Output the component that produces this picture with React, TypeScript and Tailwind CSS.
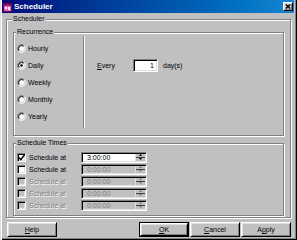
import React from "react";

// classic 3d edges
const raised =
  "border border-t-white border-l-white border-r-black border-b-black shadow-[inset_1px_1px_0_#dfdfdf,inset_-1px_-1px_0_#808080]";
const sunken =
  "border border-t-[#808080] border-l-[#808080] border-r-white border-b-white shadow-[inset_1px_1px_0_#000,inset_-1px_-1px_0_#dfdfdf]";
const etched = "border border-[#808080] shadow-[inset_1px_1px_0_#fff,1px_1px_0_#fff]";
const greyed = "text-[#808080] [text-shadow:1px_1px_0_#fff]";

const RECURRENCE = ["Hourly", "Daily", "Weekly", "Monthly", "Yearly"];

const TIMES = [
  { checked: true, boxOn: true, fieldOn: true, value: "3:00:00" },
  { checked: false, boxOn: true, fieldOn: false, value: "0:00:00" },
  { checked: false, boxOn: false, fieldOn: false, value: "0:00:00" },
  { checked: false, boxOn: false, fieldOn: false, value: "0:00:00" },
  { checked: false, boxOn: false, fieldOn: false, value: "0:00:00" },
];

function Radio({ checked }: { checked?: boolean }) {
  return (
    <svg width="9" height="9" viewBox="0 0 9 9" className="shrink-0">
      <circle cx="4.5" cy="4.5" r="2.6" fill="#fff" />
      <path d="M1.67 7.33 A4 4 0 0 1 7.33 1.67" stroke="#808080" fill="none" />
      <path d="M7.33 1.67 A4 4 0 0 1 1.67 7.33" stroke="#fff" fill="none" />
      <path d="M2.38 6.62 A3 3 0 0 1 6.62 2.38" stroke="#000" fill="none" />
      <path d="M6.62 2.38 A3 3 0 0 1 2.38 6.62" stroke="#dfdfdf" fill="none" />
      {checked && <circle cx="4.5" cy="4.5" r="1.3" fill="#000" />}
    </svg>
  );
}

function Check({ checked, enabled }: { checked: boolean; enabled: boolean }) {
  return (
    <div
      className={`${sunken} w-[9px] h-[9px] shrink-0 flex items-center justify-center ${
        enabled ? "bg-white" : "bg-[#c0c0c0]"
      }`}
    >
      {checked && (
        <svg width="7" height="7" viewBox="0 0 7 7" className="shrink-0 overflow-visible">
          <path d="M0.8 3.4 L2.8 5.6 L6.6 0.8" stroke="#000" strokeWidth="1.5" fill="none" />
        </svg>
      )}
    </div>
  );
}

function Spinner({ enabled }: { enabled: boolean }) {
  const c = enabled ? "#000" : "#808080";
  return (
    <div className="w-[10px] h-full flex flex-col bg-[#c0c0c0] border-l border-l-[#dfdfdf]">
      <div className="flex-1 flex items-center justify-center border-b border-b-[#404040]">
        <svg width="3" height="2" viewBox="0 0 3 2">
          <path d="M0 2 L1.5 0 L3 2Z" fill={c} />
        </svg>
      </div>
      <div className="flex-1 flex items-center justify-center">
        <svg width="3" height="2" viewBox="0 0 3 2">
          <path d="M0 0 L1.5 2 L3 0Z" fill={c} />
        </svg>
      </div>
    </div>
  );
}

function Button({ label, ul, isDefault }: { label: string; ul: number; isDefault?: boolean }) {
  const text = (
    <span>
      {label.slice(0, ul)}
      <span className="underline">{label[ul]}</span>
      {label.slice(ul + 1)}
    </span>
  );
  if (isDefault) {
    return (
      <div className="w-[50px] h-[15px] border border-black flex">
        <div className={`${raised} flex-1 flex items-center justify-center bg-[#c0c0c0]`}>{text}</div>
      </div>
    );
  }
  return (
    <div className={`${raised} w-[50px] h-[15px] flex items-center justify-center bg-[#c0c0c0]`}>{text}</div>
  );
}

export default function App() {
  return (
    <div className="w-[297px] h-[240px] bg-[#c0c0c0] pl-[2px] pr-[3px] pb-[2px] flex flex-col font-['Liberation_Sans',Arial,sans-serif] text-[7px] leading-[9px] text-black shadow-[inset_1px_0_0_#dfdfdf,inset_2px_0_0_#fff,inset_-1px_-1px_0_#000,inset_-2px_-2px_0_#808080]">
      {/* title bar */}
      <div className="h-[13px] mb-[1px] flex items-center pl-[1px] pr-[1px] bg-linear-to-r from-[#00087a] to-[#1686d2]">
        <svg width="9" height="10" viewBox="0 0 9 10" className="shrink-0">
          <rect x="0.5" y="1.5" width="8" height="8" fill="#e060b0" stroke="#700060" />
          <rect x="1" y="2" width="7" height="2" fill="#902080" />
          <rect x="2" y="5" width="2" height="2" fill="#fff" />
          <rect x="5" y="5" width="2" height="3" fill="#fff" />
          <rect x="2" y="0" width="1" height="3" fill="#400040" />
          <rect x="6" y="0" width="1" height="3" fill="#400040" />
        </svg>
        <span className="ml-[2px] text-white font-bold text-[8px] leading-[10px]">Scheduler</span>
        <div className={`${raised} ml-auto w-[10px] h-[9px] bg-[#c0c0c0] flex items-center justify-center`}>
          <svg width="6" height="5" viewBox="0 0 6 5">
            <path d="M0.8 0.5 L5.2 4.5 M5.2 0.5 L0.8 4.5" stroke="#000" strokeWidth="1.3" />
          </svg>
        </div>
      </div>

      {/* Scheduler group */}
      <fieldset className={`${etched} ml-[4px] mr-[3px] px-[6px] pt-[3px] pb-[1px]`}>
        <legend className="ml-[-1px] px-px bg-[#c0c0c0] leading-[10px]">Scheduler</legend>

        <fieldset className={`${etched} pl-[3px] pb-[6px]`}>
          <legend className="ml-[-1px] px-px bg-[#c0c0c0] leading-[10px]">Recurrence</legend>
          <div className="flex">
            <div className="w-[66px] pt-[3px] pb-[4px] flex flex-col">
              {RECURRENCE.map((r) => (
                <div key={r} className="h-[17px] flex items-center">
                  <Radio checked={r === "Daily"} />
                  <span className="ml-[2px]">{r}</span>
                </div>
              ))}
            </div>
            <div className="w-[2px] mt-[-1px] mb-[1px] border-l border-l-[#808080] border-r border-r-white" />
            <div className="flex-1 pl-[12px] pt-[20px]">
              <div className="h-[17px] flex items-center">
                <span className="w-[36px]">
                  <span className="underline">E</span>very
                </span>
                <div className={`${sunken} w-[25px] h-[13px] bg-white flex items-center justify-end pr-[3px]`}>1</div>
                <span className="ml-[5px]">day(s)</span>
              </div>
            </div>
          </div>
        </fieldset>

        <fieldset className={`${etched} mt-[2px] pl-[3px] pt-[3px] pb-[4px]`}>
          <legend className="ml-[-1px] px-px bg-[#c0c0c0] leading-[10px]">Schedule Times</legend>
          {TIMES.map((t, i) => (
            <div key={i} className="h-[12px] flex items-center">
              <Check checked={t.checked} enabled={t.boxOn} />
              <span className={`ml-[3px] w-[52px] ${t.boxOn ? "" : greyed}`}>Schedule at</span>
              <div
                className={`${sunken} w-[66px] h-[11px] p-px flex items-stretch ${
                  t.fieldOn ? "bg-white" : "bg-[#c0c0c0]"
                }`}
              >
                <span className={`flex-1 pl-[4px] leading-[7px] ${t.fieldOn ? "" : "text-[#808080]"}`}>
                  {t.value}
                </span>
                <Spinner enabled={t.fieldOn} />
              </div>
            </div>
          ))}
        </fieldset>
      </fieldset>

      {/* buttons */}
      <div className="mt-[4px] pl-[5px] pr-[3px] flex justify-between">
        <Button label="Help" ul={0} />
        <div className="flex gap-[1px]">
          <Button label="OK" ul={0} isDefault />
          <Button label="Cancel" ul={0} />
          <Button label="Apply" ul={1} />
        </div>
      </div>
    </div>
  );
}
